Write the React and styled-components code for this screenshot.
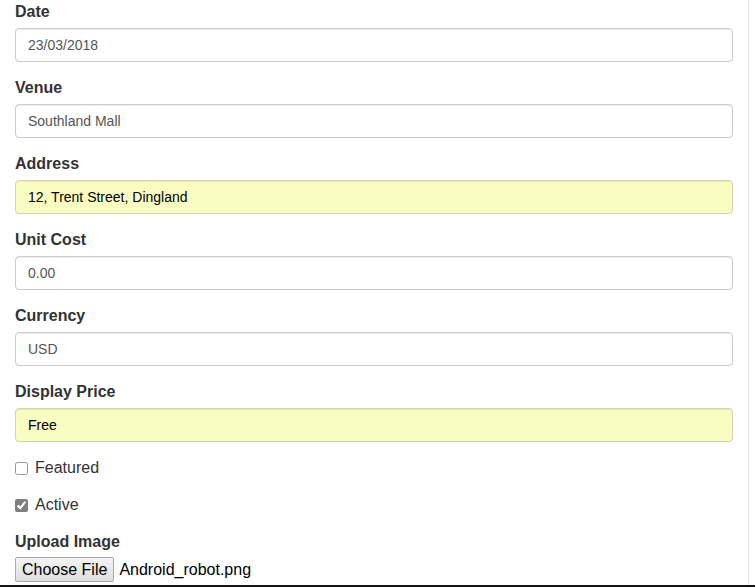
import styled, { createGlobalStyle } from "styled-components";

const GlobalStyle = createGlobalStyle`
  html, body {
    margin: 0;
    padding: 0;
    background: #fff;
  }
  body {
    font-family: "Liberation Sans", Arial, Helvetica, sans-serif;
    color: #333;
  }
`;

const fields = [
  { label: "Date", value: "23/03/2018" },
  { label: "Venue", value: "Southland Mall" },
  { label: "Address", value: "12, Trent Street, Dingland", autofill: true },
  { label: "Unit Cost", value: "0.00" },
  { label: "Currency", value: "USD" },
  { label: "Display Price", value: "Free", autofill: true },
];

export default function App() {
  return (
    <>
      <GlobalStyle />
      <Window>
        <Form>
          {fields.map((f) => (
            <FormGroup key={f.label}>
              <Label>{f.label}</Label>
              <Input $autofill={f.autofill} defaultValue={f.value} readOnly />
            </FormGroup>
          ))}
          <CheckRow>
            <Box type="checkbox" readOnly />
            Featured
          </CheckRow>
          <CheckRow>
            <Box type="checkbox" defaultChecked readOnly />
            Active
          </CheckRow>
          <div>
            <Label>Upload Image</Label>
            <FileRow>
              <FileButton type="button">Choose File</FileButton>
              <FileName>Android_robot.png</FileName>
            </FileRow>
          </div>
        </Form>
        <Gutter />
      </Window>
    </>
  );
}

const Window = styled.div`
  display: flex;
  height: 585px;
  border-bottom: 2px solid #111;
  overflow: hidden;
`;

const Form = styled.form`
  flex: 1;
  padding: 1px 15px 0 15px;
  border-right: 1px solid #e2e7ea;
  background: #fff;
`;

const Gutter = styled.div`
  width: 6px;
  background: #fff;
`;

const FormGroup = styled.div`
  margin-bottom: 15px;
`;

const Label = styled.label`
  display: block;
  font-size: 16px;
  font-weight: bold;
  line-height: 22px;
  margin-bottom: 5px;
  color: #333;
`;

const Input = styled.input`
  display: block;
  box-sizing: border-box;
  width: 718px;
  height: 34px;
  padding: 6px 12px;
  font-family: "Liberation Sans", Arial, sans-serif;
  font-size: 14px;
  color: ${(p) => (p.$autofill ? "#000" : "#555")};
  background: ${(p) => (p.$autofill ? "#fafdc2" : "#fff")};
  border: 1px solid ${(p) => (p.$autofill ? "#d3d4b6" : "#ccc")};
  border-radius: 4px;
  box-shadow: inset 0 1px 1px rgba(0, 0, 0, 0.075);
  outline: none;
`;

const CheckRow = styled.label`
  display: flex;
  align-items: center;
  height: 20px;
  padding-top: 1px;
  margin: 0 0 16px;
  font-size: 16px;
  color: #333;
`;

const Box = styled.input`
  width: 13px;
  height: 13px;
  margin: 0 7px 0 0;
  accent-color: #555;
  opacity: 0.75;
`;

const FileRow = styled.div`
  display: flex;
  align-items: center;
  margin-top: -1px;
`;

const FileButton = styled.button`
  height: 25px;
  padding: 0 6px;
  font-family: "Liberation Sans", Arial, sans-serif;
  font-size: 16px;
  color: #000;
  background: linear-gradient(#f4f4f4, #dedede);
  border: 1px solid #a9a9a9;
  border-radius: 2px;
`;

const FileName = styled.span`
  margin-left: 5px;
  font-size: 16px;
  color: #000;
`;
